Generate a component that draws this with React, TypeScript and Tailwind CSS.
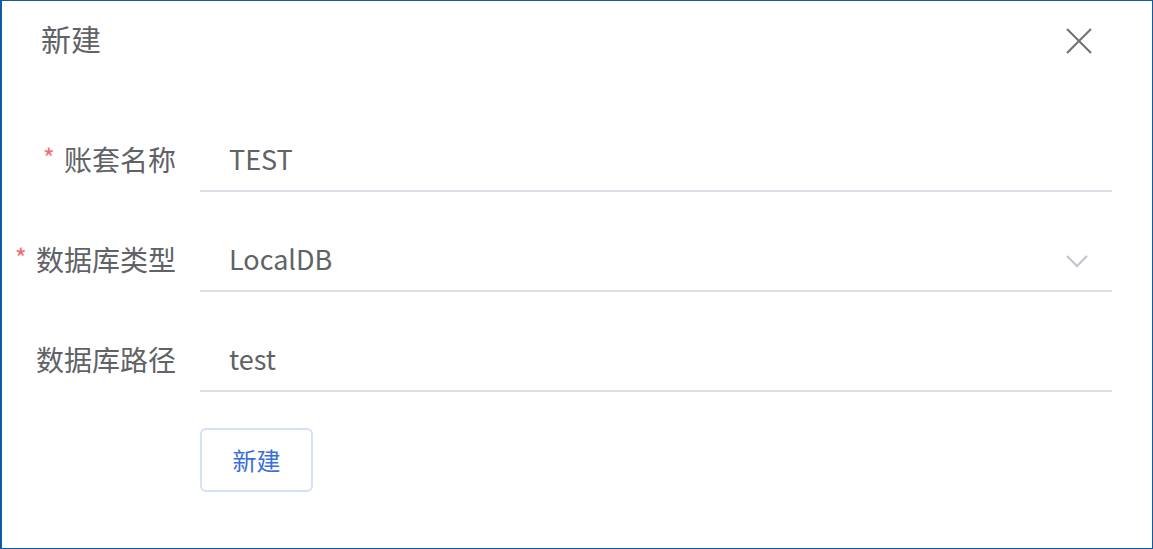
import React from "react"

const font = { fontFamily: '"Noto Sans CJK SC", "Noto Sans", sans-serif' }

function Row({ label, required, children }: { label: string; required?: boolean; children: React.ReactNode }) {
  return (
    <div className="flex items-center h-[60px]">
      <div className="w-[198px] pr-[24px] flex items-center justify-end text-[28px] text-[#606266] relative top-[-3px]">
        {required && <span className="text-[#f56c6c] text-[26px] mr-[9px] relative top-[-3px]">*</span>}
        <span>{label}</span>
      </div>
      <div className="flex-1 h-full border-b-2 border-[#dcdfe6] flex items-center pl-[29px] pr-[24px] text-[27px] text-[#606266]">
        <div className="flex-1 flex items-center relative top-[-2px]">{children}</div>
      </div>
    </div>
  )
}

export default function App() {
  return (
    <div style={font} className="w-[1153px] h-[549px] bg-white border border-l-2 border-[#0d5aa7] flex flex-col">
      <div className="h-[79px] flex items-center justify-between pl-[39px] pr-[60px]">
        <span className="text-[30px] text-[#606266] relative top-[-2px]">新建</span>
        <svg width="26" height="26" viewBox="0 0 26 26" className="text-[#707070]">
          <path d="M1 1 L25 25 M25 1 L1 25" stroke="currentColor" strokeWidth="2" fill="none" />
        </svg>
      </div>
      <div className="flex flex-col gap-[40px] pt-[52px] pr-[40px]">
        <Row label="账套名称" required>TEST</Row>
        <Row label="数据库类型" required>
          <span className="flex-1">LocalDB</span>
          <svg width="22" height="13" viewBox="0 0 22 13" className="text-[#c0c4cc] relative top-[2px]">
            <path d="M1 1 L11 11 L21 1" stroke="currentColor" strokeWidth="2" fill="none" />
          </svg>
        </Row>
        <Row label="数据库路径">test</Row>
      </div>
      <div className="pl-[198px] pt-[36px]">
        <button className="w-[113px] h-[64px] rounded-[6px] border-2 border-[#d6e1f5] bg-white text-[#3a6fd8] text-[24px]">
          新建
        </button>
      </div>
    </div>
  )
}
